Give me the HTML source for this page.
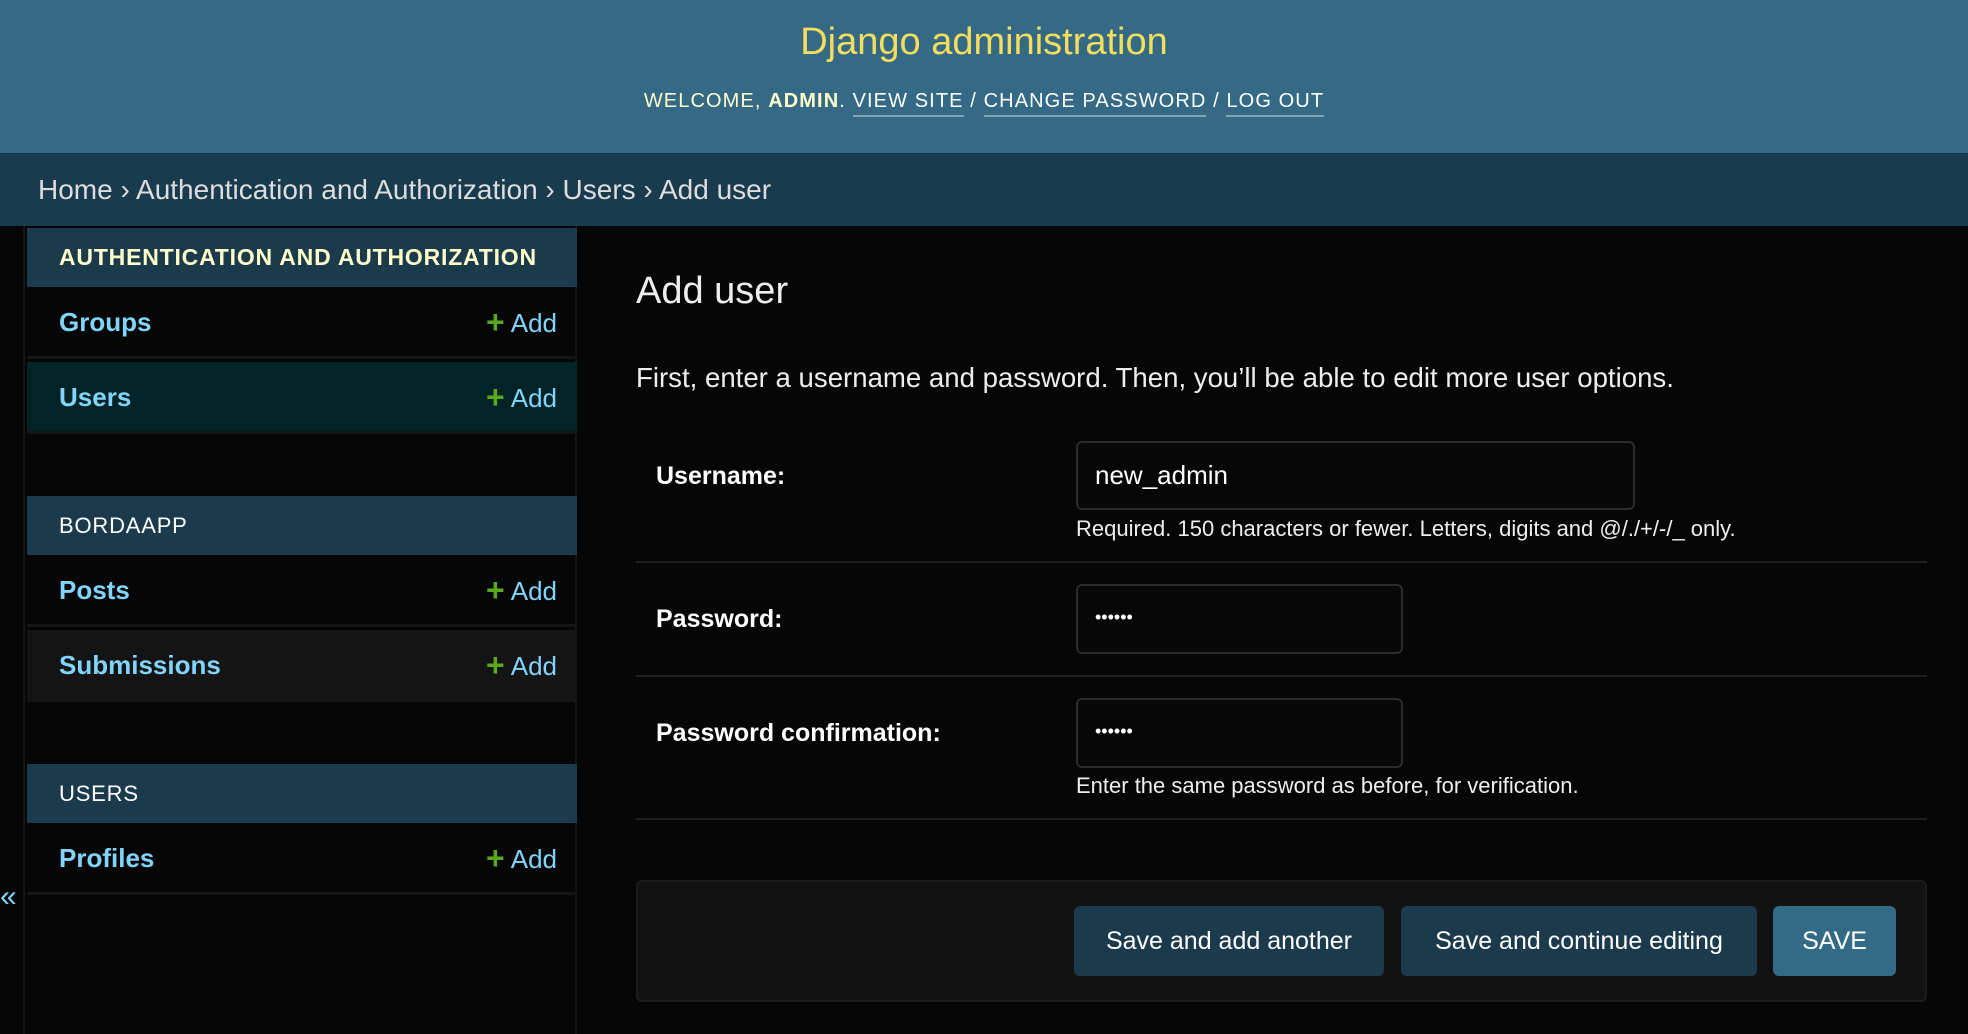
<!DOCTYPE html>
<html><head><meta charset="utf-8"><style>
*{box-sizing:border-box;margin:0;padding:0}
body{width:1968px;height:1034px;overflow:hidden;background:#060606;font-family:"Liberation Sans",sans-serif;color:#eee;position:relative}
.abs{position:absolute}
#hdr{left:0;top:0;width:1968px;height:153px;background:#346a85}
#title{left:0;top:18px;width:1968px;text-align:center;color:#f5dd5d;font-size:38px;line-height:48px}
#tools{left:0;top:88px;width:1968px;text-align:center;color:#ffffcc;font-size:20px;letter-spacing:1.1px;line-height:26px}
#tools b{font-weight:bold}
#tools em{font-style:normal;color:#fff}
#tools span{color:#fff;border-bottom:2px solid #7fa2b4;padding-bottom:3px}
#bc{left:0;top:153px;width:1968px;height:73px;background:#193b4e;padding-left:38px;font-size:28px;line-height:73px;color:#ddd}
#side{left:23px;top:226px;width:554px;height:808px;border-left:2px solid #161616;border-right:2px solid #161616}
.cap{position:absolute;left:2px;width:550px;height:59px;background:#1b3b4d;padding-left:32px;font-size:22px;line-height:59px;color:#fff;letter-spacing:0.8px}
.cap.y{color:#ffffcc;font-weight:bold;font-size:23px}
.row{position:absolute;left:2px;width:550px;height:72px;border-bottom:3px solid #151515;padding-left:32px;line-height:70px;font-size:26px;font-weight:bold;color:#81d4fa}
.row .add{position:absolute;right:20px;top:0;font-weight:normal;color:#81d4fa}
.row .add i{font-style:normal;color:#5ba81f;font-weight:bold;font-size:32px;margin-right:6px;vertical-align:-1px}
#tog{left:0;top:880px;color:#81d4fa;font-size:30px}
h1{position:absolute;left:636px;top:270px;font-size:38px;font-weight:normal;color:#eee}
#intro{left:636px;top:362px;font-size:27.6px;color:#eee}
.lbl{position:absolute;left:656px;font-size:25px;font-weight:bold;color:#fff}
.inp{position:absolute;left:1076px;border:2px solid #2b2b2b;border-radius:6px;background:#070707;font-size:26px;padding-left:17px;color:#fff}
.help{position:absolute;left:1076px;font-size:22px;color:#eee}
.hr{position:absolute;left:636px;width:1291px;height:2px;background:#1e1e1e}
#sub{left:636px;top:880px;width:1291px;height:122px;background:#121212;border:2px solid #1c1c1c;border-radius:6px}
.btn{position:absolute;top:906px;height:70px;border-radius:6px;background:#1b3b4d;color:#fff;font-size:25px;line-height:70px;text-align:center}
</style></head><body>
<div id="hdr" class="abs"></div>
<div id="title" class="abs">Django administration</div>
<div id="tools" class="abs">WELCOME, <b>ADMIN</b>. <span>VIEW SITE</span> <em>/</em> <span>CHANGE PASSWORD</span> <em>/</em> <span>LOG OUT</span></div>
<div id="bc" class="abs">Home › Authentication and Authorization › Users › Add user</div>

<div id="side" class="abs">
 <div class="cap y" style="top:2px">AUTHENTICATION AND AUTHORIZATION</div>
 <div class="row" style="top:61px">Groups<span class="add"><i>+</i>Add</span></div>
 <div class="row" style="top:136px;background:#022426">Users<span class="add"><i>+</i>Add</span></div>
 <div class="cap" style="top:270px">BORDAAPP</div>
 <div class="row" style="top:329px">Posts<span class="add"><i>+</i>Add</span></div>
 <div class="row" style="top:404px;background:#141414">Submissions<span class="add"><i>+</i>Add</span></div>
 <div class="cap" style="top:538px">USERS</div>
 <div class="row" style="top:597px">Profiles<span class="add"><i>+</i>Add</span></div>
</div>
<div id="tog" class="abs">«</div>

<h1>Add user</h1>
<div id="intro" class="abs">First, enter a username and password. Then, you’ll be able to edit more user options.</div>

<div class="lbl" style="top:462px">Username:</div>
<div class="inp" style="top:441px;width:559px;height:69px;line-height:65px">new_admin</div>
<div class="help" style="top:516px">Required. 150 characters or fewer. Letters, digits and @/./+/-/_ only.</div>
<div class="hr" style="top:561px"></div>

<div class="lbl" style="top:605px">Password:</div>
<div class="inp" style="top:584px;width:327px;height:70px;line-height:62px;font-size:18px">••••••</div>
<div class="hr" style="top:675px"></div>

<div class="lbl" style="top:719px">Password confirmation:</div>
<div class="inp" style="top:698px;width:327px;height:70px;line-height:62px;font-size:18px">••••••</div>
<div class="help" style="top:773px">Enter the same password as before, for verification.</div>
<div class="hr" style="top:818px"></div>

<div id="sub" class="abs"></div>
<div class="btn" style="left:1074px;width:310px">Save and add another</div>
<div class="btn" style="left:1401px;width:356px">Save and continue editing</div>
<div class="btn" style="left:1773px;width:123px;background:#336b87">SAVE</div>
</body></html>
